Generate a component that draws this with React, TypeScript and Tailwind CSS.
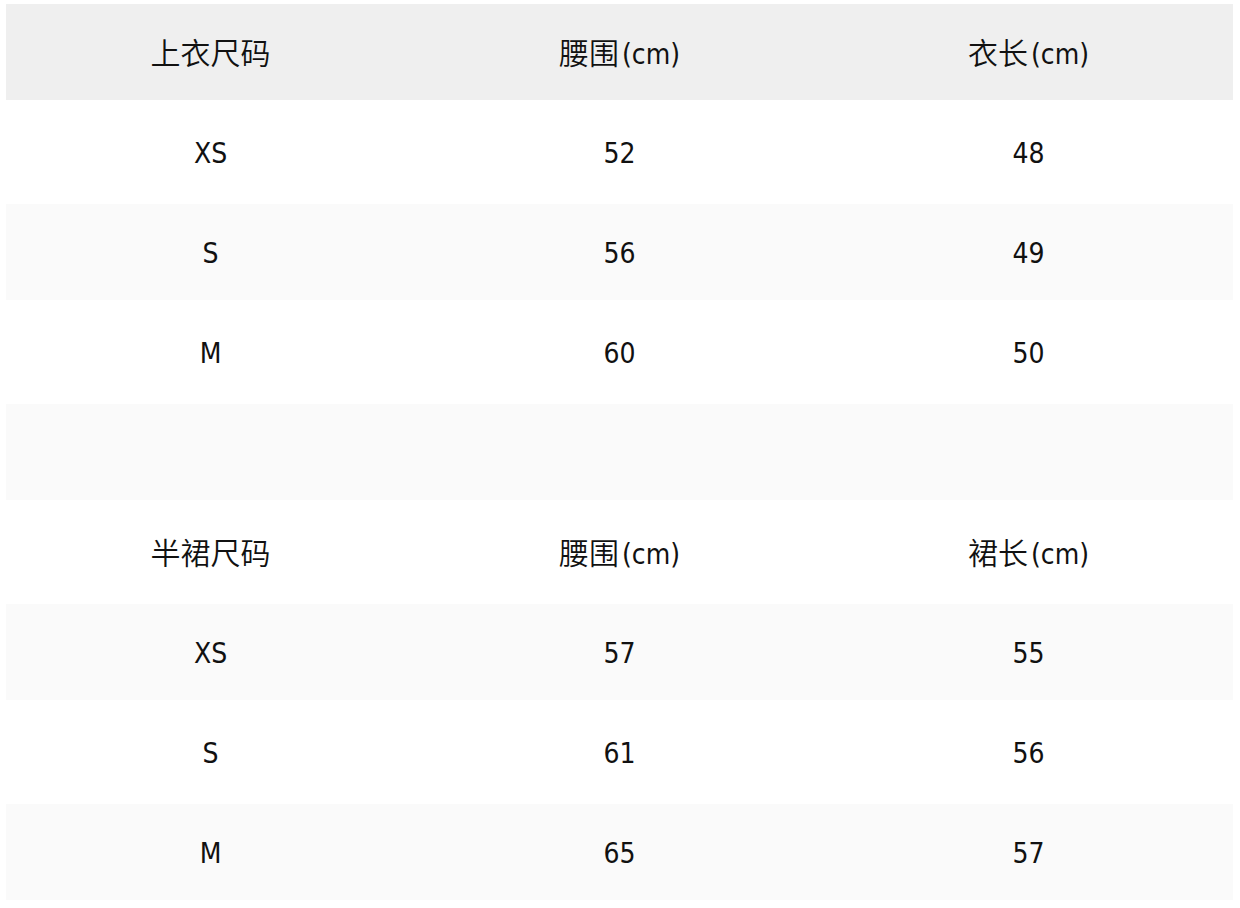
import React from "react";

type Row = { cells: string[]; tone: "head" | "white" | "light" };

const rows: Row[] = [
  { cells: ["上衣尺码", "腰围(cm)", "衣长(cm)"], tone: "head" },
  { cells: ["XS", "52", "48"], tone: "white" },
  { cells: ["S", "56", "49"], tone: "light" },
  { cells: ["M", "60", "50"], tone: "white" },
  { cells: ["", "", ""], tone: "light" },
  { cells: ["半裙尺码", "腰围(cm)", "裙长(cm)"], tone: "white" },
  { cells: ["XS", "57", "55"], tone: "light" },
  { cells: ["S", "61", "56"], tone: "white" },
  { cells: ["M", "65", "57"], tone: "light" },
];

const toneClass = {
  head: "bg-[#efefef] h-[96px]",
  white: "bg-white h-[104px]",
  light: "bg-[#fafafa] h-[96px]",
};

// split so the latin part can be a touch narrower than the CJK part
function Cell({ text }: { text: string }) {
  const m = text.match(/^([^\x00-\x7f]*)(.*)$/);
  const cjk = m ? m[1] : "";
  const latin = m ? m[2] : text;
  return (
    <div className="text-center leading-none pt-[3px]">
      {cjk && <span className="text-[30px] font-[350]">{cjk}</span>}
      {latin && <span className={`text-[28px] ${cjk ? "ml-[3px]" : ""}`}>{latin}</span>}
    </div>
  );
}

export default function App() {
  return (
    <div
      className="w-[1240px] h-[908px] bg-white pt-[4px] pl-[6px] pr-[7px] text-[#111]"
      style={{ fontFamily: '"DejaVu Sans Condensed", "Noto Sans CJK SC", sans-serif', fontStretch: "condensed" }}
    >
      {rows.map((row, i) => (
        <div key={i} className={`grid grid-cols-3 items-center ${toneClass[row.tone]}`}>
          {row.cells.map((c, j) => (
            <Cell key={j} text={c} />
          ))}
        </div>
      ))}
    </div>
  );
}
